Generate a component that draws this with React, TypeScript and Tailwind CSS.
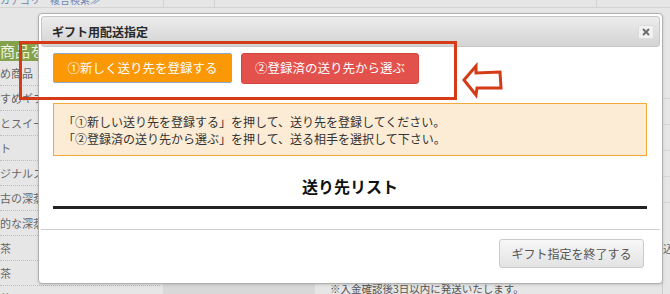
import { X } from 'lucide-react';

const sideItems = ['め商品', 'すめギフ', 'とスイー', 'ト', 'ジナルス', '古の深蒸', '的な深蒸', '茶', '茶', '茶'];

export default function App() {
  return (
    <div className="relative w-[670px] h-[294px] overflow-hidden bg-[#e6e6e6] font-['Noto_Sans_CJK_JP',sans-serif]">
      {/* Page behind the dialog */}
      <div className="flex flex-col h-full">
        <div className="flex h-[8px] shrink-0 border-b border-[#d3d3d3]">
          <div className="w-[163px] overflow-hidden">
            <div className="-mt-[6px] text-[10px] leading-[12px] text-[#6b86b3] whitespace-nowrap">カテゴリー複合検索≫</div>
          </div>
          <div className="w-[52px] border-x border-[#d3d3d3]" />
          <div className="w-[382px] border-r border-[#d3d3d3]" />
          <div className="flex-1" />
        </div>

        <div className="flex flex-1 min-h-0 overflow-hidden pt-[33px]">
          <aside className="w-[160px]">
            <div className="h-[20px] bg-[#84a14c] text-[15px] leading-[20px] text-[#eef3e2] whitespace-nowrap overflow-hidden">
              商品を
            </div>
            {sideItems.map((t, i) => (
              <div
                key={i}
                className="h-[25px] border-b border-dotted border-[#bcbcbc] text-[11px] leading-[24px] text-[#666] whitespace-nowrap overflow-hidden"
              >
                {t}
              </div>
            ))}
          </aside>

          <main className="flex-1 flex flex-col justify-end">
            <div className="flex h-[10px] items-start">
              <div className="ml-[3px] w-[152px] h-full bg-[#d8d8d8]" />
              <div className="ml-[15px] -mt-[1px] text-[10.5px] leading-[12px] text-[#555] whitespace-nowrap">
                ※入金確認後3日以内に発送いたします。
              </div>
            </div>
          </main>

          <div className="w-[8px] border-l border-[#cdcdcd] flex flex-col pt-[32px]">
            {[0, 1, 2, 3, 4].map((i) => (
              <div key={i} className="h-[26px] border-b border-[#d6d6d6]" />
            ))}
            <div className="mt-[40px] text-[10px] leading-[12px] text-[#666] whitespace-nowrap">込み</div>
          </div>
        </div>
      </div>

      {/* Dialog */}
      <div className="absolute left-[38px] top-[13px] w-[625px] h-[271px] rounded-[4px] border border-[#b0b0b0] bg-white p-[2px] flex flex-col shadow-[0_1px_3px_rgba(0,0,0,0.15)]">
        <div className="h-[31px] shrink-0 rounded-[3px] border border-[#c6c6c6] bg-gradient-to-b from-[#ececec] to-[#d4d4d4] flex items-center justify-between pl-[10px] pr-[5px]">
          <span className="text-[12px] font-bold text-[#2a2a2a]">ギフト用配送指定</span>
          <button className="w-[16px] h-[14px] flex items-center justify-center rounded-[2px] border border-[#dcdcdc] bg-[#f2f2f2] text-[#6f6f6f]">
            <X size={10} strokeWidth={4.5} />
          </button>
        </div>

        <div className="flex-1 flex flex-col">
          <div className="pl-[12px] pr-[13px] pt-[6px]">
            <div className="flex gap-[9px]">
              <button className="w-[179px] h-[30px] rounded-[2px] border border-[#8ea8c9] bg-[#fb9806] text-[12.5px] text-white">
                ①新しく送り先を登録する
              </button>
              <button className="w-[178px] h-[31px] rounded-[3px] border border-[#d4453f] bg-[#e2514b] text-[12.5px] text-white">
                ②登録済の送り先から選ぶ
              </button>
            </div>

            <div className="mt-[19px] h-[53px] border border-[#f5a93c] bg-[#fcecd6] px-[9px] py-[9px] text-[12px] leading-[17px] text-[#333]">
              <p>「①新しい送り先を登録する」を押して、送り先を登録してください。</p>
              <p>「②登録済の送り先から選ぶ」を押して、送る相手を選択して下さい。</p>
            </div>

            <h2 className="mt-[18px] text-center text-[16px] leading-[24px] font-bold text-[#111]">送り先リスト</h2>
            <div className="mt-[8px] h-[3px] bg-[#222]" />
          </div>

          <div className="mt-[20px] border-t border-[#cfcfcf] flex justify-end pt-[9px] pr-[16px]">
            <button className="w-[145px] h-[29px] rounded-[3px] border border-[#cacaca] bg-gradient-to-b from-[#f7f7f7] to-[#e3e3e3] text-[12px] text-[#555]">
              ギフト指定を終了する
            </button>
          </div>
        </div>
      </div>

      {/* Annotation: highlight box and arrow */}
      <div className="absolute left-[19px] top-[41px] w-[438px] h-[59px] border-[3px] border-[#d63b17]" />
      <svg className="absolute left-[460px] top-[62px]" width="46" height="37" viewBox="0 0 46 37">
        <path
          d="M4 18 L16 4 L16 11 L40 10 L41 26 L17 26 L16 33 Z"
          fill="white"
          stroke="#d63b17"
          strokeWidth="3"
          strokeLinejoin="miter"
        />
      </svg>
    </div>
  );
}
